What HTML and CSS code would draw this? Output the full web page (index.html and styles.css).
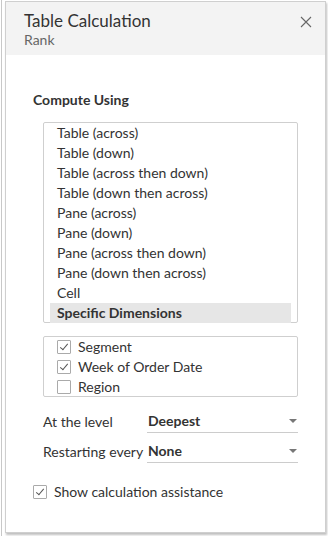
FILE: index.html
```html
<!DOCTYPE html>
<html lang="en">
<head>
    <meta charset="UTF-8">
    <meta name="viewport" content="width=device-width, initial-scale=1.0">
    <title>Table Calculation</title>
    <link rel="stylesheet" href="styles.css">
</head>
<body>
    <div class="app">
        <div class="dialog">
            <div class="header">
                <div class="titles">
                    <div class="title">Table Calculation</div>
                    <div class="subtitle">Rank</div>
                </div>
                <svg class="close" width="12" height="12" viewBox="0 0 12 12">
                    <path d="M1 1 L11 11 M11 1 L1 11" stroke="#666" stroke-width="1.1" fill="none"/>
                </svg>
            </div>
            <div class="content">
                <div class="section-title">Compute Using</div>
                <ul class="list">
                    <li>Table (across)</li>
                    <li>Table (down)</li>
                    <li>Table (across then down)</li>
                    <li>Table (down then across)</li>
                    <li>Pane (across)</li>
                    <li>Pane (down)</li>
                    <li>Pane (across then down)</li>
                    <li>Pane (down then across)</li>
                    <li>Cell</li>
                    <li class="selected">Specific Dimensions</li>
                </ul>
                <div class="dims">
                    <label class="check"><span class="box on"></span>Segment</label>
                    <label class="check"><span class="box on"></span>Week of Order Date</label>
                    <label class="check"><span class="box"></span>Region</label>
                </div>
                <div class="field">
                    <span class="field-label">At the level</span>
                    <div class="select">Deepest<span class="arrow"></span></div>
                </div>
                <div class="field">
                    <span class="field-label">Restarting every</span>
                    <div class="select">None<span class="arrow"></span></div>
                </div>
                <label class="check assist"><span class="box on"></span>Show calculation assistance</label>
            </div>
        </div>
    </div>
</body>
</html>
```

FILE: styles.css
```css
body {
    margin: 0;
    background: #fff;
    font-family: Lato, "Noto Sans", sans-serif;
    color: #333;
}
.app {
    margin-left: 1px;
    border-left: 1px solid #c8c8c8;
    height: 536px;
    box-sizing: border-box;
    padding: 1px 2px 0 3px;
}
.dialog {
    width: 321px;
    height: 532px;
    box-sizing: border-box;
    border: 1px solid #cfcfcf;
    background: #fff;
    box-shadow: 1px 2px 2px rgba(0, 0, 0, 0.25);
}
.header {
    background: #f3f3f3;
    height: 53px;
    display: flex;
    justify-content: space-between;
    padding: 8px 13px 0 18px;
    box-sizing: border-box;
}
.title {
    font-size: 17px;
    color: #333;
    line-height: 21px;
}
.subtitle {
    font-size: 14px;
    color: #666;
    line-height: 18px;
}
.close {
    margin-top: 6px;
}
.content {
    padding: 36px 0 0 27px;
    font-size: 14px;
}
.section-title {
    font-weight: bold;
    line-height: 18px;
    margin-bottom: 13px;
}
.list {
    list-style: none;
    margin: 0 0 0 10px;
    padding: 0 6px;
    width: 255px;
    height: 201px;
    box-sizing: border-box;
    border: 1px solid #cfcfcf;
    border-radius: 2px;
}
.list li {
    height: 20px;
    line-height: 20px;
    padding-left: 7px;
}
.list li.selected {
    background: #e6e6e6;
    font-weight: bold;
}
.dims {
    margin: 13px 0 0 10px;
    width: 255px;
    height: 61px;
    box-sizing: border-box;
    border: 1px solid #cfcfcf;
    border-radius: 2px;
    padding: 0 0 0 13px;
}
.check {
    display: flex;
    align-items: center;
    height: 20px;
    line-height: 18px;
}
.box {
    width: 12px;
    height: 12px;
    border: 1px solid #aaa;
    border-radius: 1px;
    margin-right: 7px;
    position: relative;
}
.box.on::after {
    content: "";
    position: absolute;
    left: 4px;
    top: 1px;
    width: 3px;
    height: 7px;
    border: solid #555;
    border-width: 0 1.4px 1.4px 0;
    transform: rotate(40deg);
}
.field {
    display: flex;
    align-items: center;
    margin: 12px 0 0 10px;
    height: 24px;
}
.field + .field {
    margin-top: 6px;
}
.field-label {
    width: 104px;
}
.select {
    width: 151px;
    height: 24px;
    line-height: 24px;
    box-sizing: border-box;
    border-bottom: 1px solid #ccc;
    font-weight: bold;
    padding-left: 1px;
    display: flex;
    justify-content: space-between;
    align-items: center;
}
.arrow {
    width: 0;
    height: 0;
    border-left: 4px solid transparent;
    border-right: 4px solid transparent;
    border-top: 4px solid #777;
    margin-right: 1px;
}
.assist {
    margin-top: 19px;
}
```
